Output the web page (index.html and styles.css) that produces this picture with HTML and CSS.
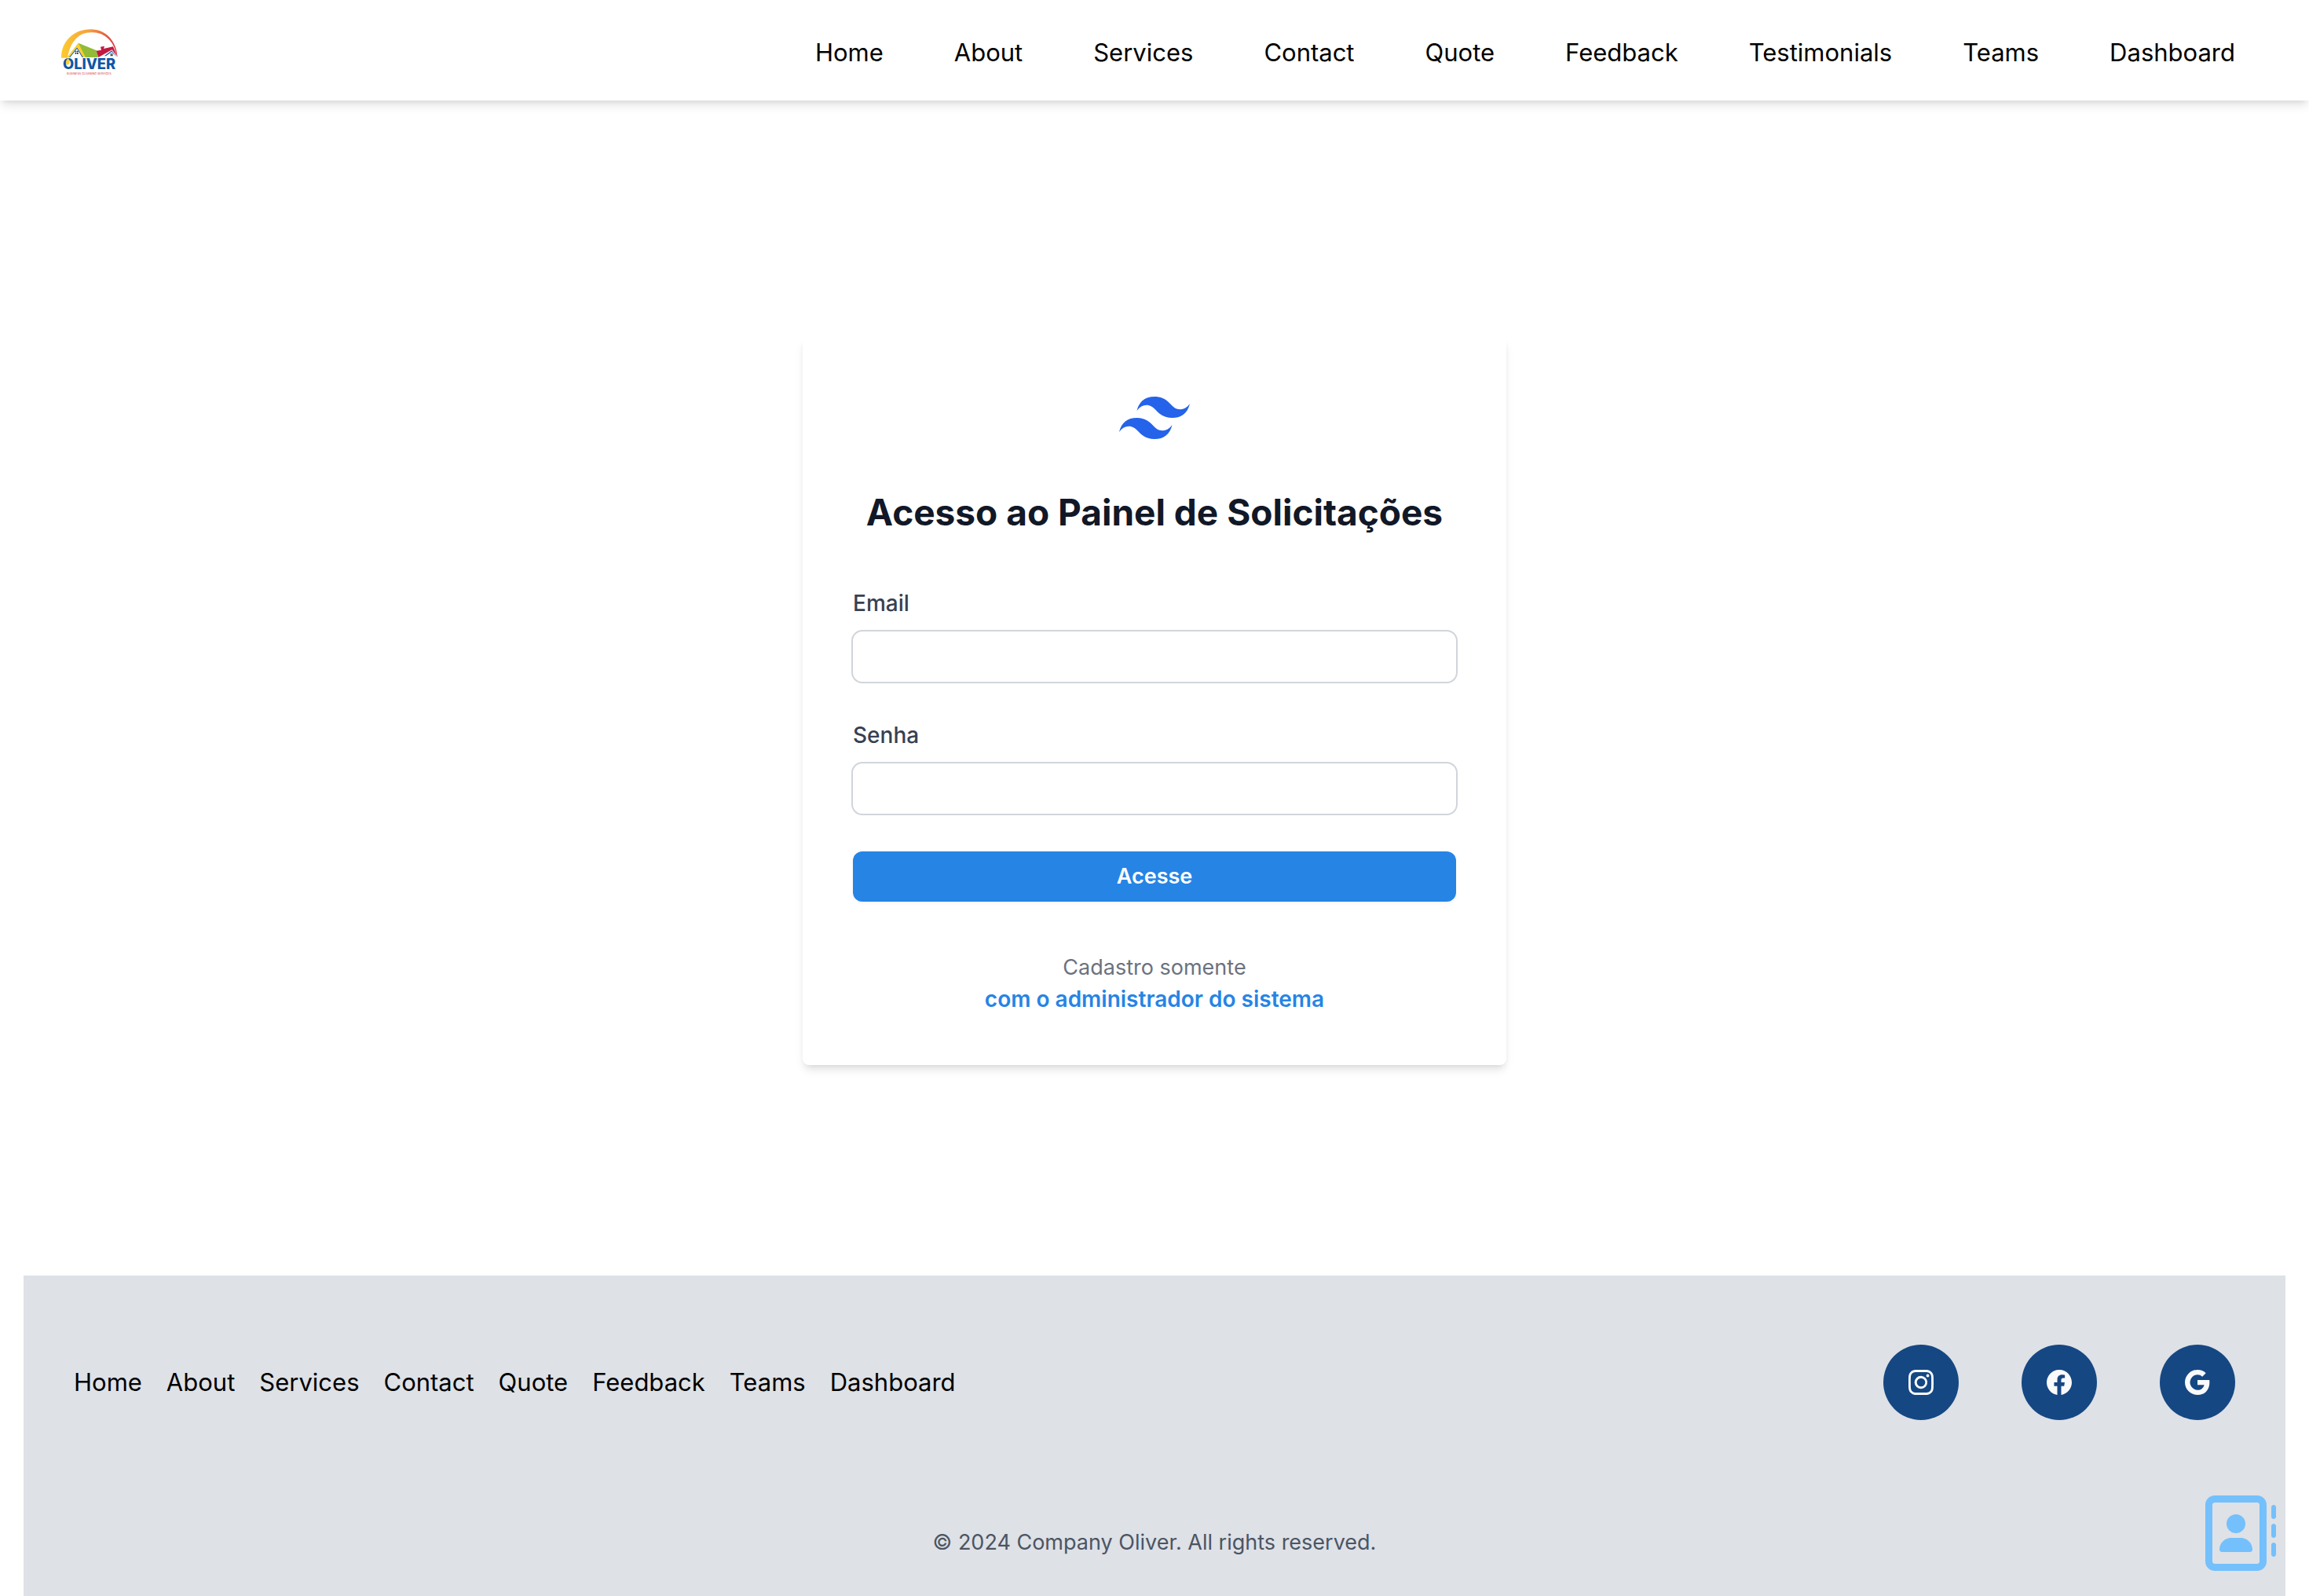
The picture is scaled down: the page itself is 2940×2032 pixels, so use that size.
FILE: index.html
```html
<!DOCTYPE html>
<html lang="pt">
<head>
<meta charset="utf-8">
<meta name="viewport" content="width=device-width, initial-scale=1">
<title>Oliver</title>
<link rel="stylesheet" href="styles.css">
</head>
<body>
<header class="header">
  <a class="logo" href="#" aria-label="Oliver">
    <svg viewBox="0 0 216 180" width="72" height="60">
      <defs>
        <linearGradient id="arc" x1="0" x2="1"><stop offset="0" stop-color="#fccb2f"/><stop offset=".5" stop-color="#f5a03c"/><stop offset="1" stop-color="#d8303f"/></linearGradient>
      </defs>
      <path fill="url(#arc)" d="M0 110C0 44 50 1 112 1c60 0 99 46 103 107l-5-14C200 46 164 11 116 13 62 13 34 52 24 110z"/>
      <path fill="#fad02c" d="M22 108 65 53l32 55H84L60 68 30 108z"/>
      <path fill="#1d5ea8" d="m30 108 30-38 24 38h-4L60 75l-26 33z"/>
      <path fill="#93bb38" d="m65 53 70 29 6 26H93z"/>
      <path fill="#c31941" d="m134 83 19-3-3-12 15-3-3 10 36-8 16 39-20-27-52 29z"/>
      <path fill="#1d5ea8" d="m164 103 29-21 19 26-19-21-22 16z"/>
      <path fill="#222" d="M53 83h5v5h-5zm7 0h5v5h-5zm-7 7h5v5h-5zm7 0h5v5h-5zM188 94h4v4h-4zm5 0h4v4h-4zm-5 5h4v4h-4zm5 0h4v4h-4z"/>
      <text class="logo-name" x="6" y="154" fill="#0f56a4">OLIVER</text>
      <path fill="#fad02c" d="M26 111c8 10 9 22-2 26-9-5-9-15 2-26z"/>
      <text class="logo-tag" x="21" y="173" fill="#e2585b">BUSINESS CLEANING SERVICES</text>
    </svg>
  </a>
  <nav class="nav" aria-label="Main">
    <a href="#">Home</a><a href="#">About</a><a href="#">Services</a><a href="#">Contact</a><a href="#">Quote</a><a href="#">Feedback</a><a href="#">Testimonials</a><a href="#">Teams</a><a href="#">Dashboard</a>
  </nav>
</header>
<main class="main">
  <section class="card">
    <svg class="mark" viewBox="0 0 54 33" width="90" height="55" aria-hidden="true"><path fill="#2563eb" fill-rule="evenodd" d="M27 0c-7.2 0-11.7 3.6-13.5 10.8 2.7-3.6 5.85-4.95 9.45-4.05 2.054.513 3.522 2.004 5.147 3.653C30.744 13.09 33.808 16.2 40.5 16.2c7.2 0 11.7-3.6 13.5-10.8-2.7 3.6-5.85 4.95-9.45 4.05-2.054-.513-3.522-2.004-5.147-3.653C36.756 3.11 33.692 0 27 0zM13.5 16.2C6.3 16.2 1.8 19.8 0 27c2.7-3.6 5.85-4.95 9.45-4.05 2.054.514 3.522 2.004 5.147 3.653C17.244 29.29 20.308 32.4 27 32.4c7.2 0 11.7-3.6 13.5-10.8-2.7 3.6-5.85 4.95-9.45 4.05-2.054-.513-3.522-2.004-5.147-3.653C23.256 19.31 20.192 16.2 13.5 16.2z"/></svg>
    <h1 class="title">Acesso ao Painel de Solicitações</h1>
    <form class="form">
      <div class="field"><label for="email">Email</label><input id="email" type="email"></div>
      <div class="field"><label for="senha">Senha</label><input id="senha" type="password"></div>
      <button class="submit" type="submit">Acesse</button>
    </form>
    <p class="note">Cadastro somente <a href="#">com o administrador do sistema</a></p>
  </section>
</main>
<footer class="footer">
  <div class="footer-row">
    <nav class="footer-nav" aria-label="Footer">
      <a href="#">Home</a><a href="#">About</a><a href="#">Services</a><a href="#">Contact</a><a href="#">Quote</a><a href="#">Feedback</a><a href="#">Teams</a><a href="#">Dashboard</a>
    </nav>
    <div class="social">
      <a href="#" aria-label="Instagram"><svg viewBox="0 0 16 16" width="32" height="32"><path d="M8 0C5.829 0 5.556.01 4.703.048 3.85.088 3.269.222 2.76.42a3.917 3.917 0 0 0-1.417.923A3.927 3.927 0 0 0 .42 2.76C.222 3.268.087 3.85.048 4.7.01 5.555 0 5.827 0 8.001c0 2.172.01 2.444.048 3.297.04.852.174 1.433.372 1.942.205.526.478.972.923 1.417.444.445.89.719 1.416.923.51.198 1.09.333 1.942.372C5.555 15.99 5.827 16 8 16s2.444-.01 3.298-.048c.851-.04 1.434-.174 1.943-.372a3.916 3.916 0 0 0 1.416-.923c.445-.445.718-.891.923-1.417.197-.509.332-1.09.372-1.942C15.99 10.445 16 10.173 16 8s-.01-2.445-.048-3.299c-.04-.851-.175-1.433-.372-1.941a3.926 3.926 0 0 0-.923-1.417A3.911 3.911 0 0 0 13.24.42c-.51-.198-1.092-.333-1.943-.372C10.443.01 10.172 0 7.998 0h.003zm-.717 1.442h.718c2.136 0 2.389.007 3.232.046.78.035 1.204.166 1.486.275.373.145.64.319.92.599.28.28.453.546.598.92.11.281.24.705.275 1.485.039.843.047 1.096.047 3.231s-.008 2.389-.047 3.232c-.035.78-.166 1.203-.275 1.485a2.47 2.47 0 0 1-.599.919c-.28.28-.546.453-.92.598-.28.11-.704.24-1.485.276-.843.038-1.096.047-3.232.047s-2.39-.009-3.233-.047c-.78-.036-1.203-.166-1.485-.276a2.478 2.478 0 0 1-.92-.598 2.48 2.48 0 0 1-.6-.92c-.109-.281-.24-.705-.275-1.485-.038-.843-.046-1.096-.046-3.233 0-2.136.008-2.388.046-3.231.036-.78.166-1.204.276-1.486.145-.373.319-.64.599-.92.28-.28.546-.453.92-.598.282-.11.705-.24 1.485-.276.738-.034 1.024-.044 2.515-.045v.002zm4.988 1.328a.96.96 0 1 0 0 1.920.96.96 0 0 0 0-1.920zm-4.270 1.122a4.109 4.109 0 1 0 0 8.217 4.109 4.109 0 0 0 0-8.217zm0 1.441a2.667 2.667 0 1 1 0 5.334 2.667 2.667 0 0 1 0-5.334z"/></svg></a>
      <a href="#" aria-label="Facebook"><svg viewBox="0 0 16 16" width="32" height="32"><path d="M16 8.049c0-4.446-3.582-8.05-8-8.05C3.58 0-.002 3.603-.002 8.05c0 4.017 2.926 7.347 6.75 7.951v-5.625h-2.03V8.05H6.75V6.275c0-2.017 1.195-3.131 3.022-3.131.876 0 1.791.157 1.791.157v1.98h-1.009c-.993 0-1.303.621-1.303 1.258v1.51h2.218l-.354 2.326H9.25V16c3.824-.604 6.75-3.934 6.75-7.951z"/></svg></a>
      <a href="#" aria-label="Google"><svg viewBox="0 0 16 16" width="32" height="32"><path d="M15.545 6.558a9.42 9.42 0 0 1 .139 1.626c0 2.434-.87 4.492-2.384 5.885h.002C11.978 15.292 10.158 16 8 16A8 8 0 1 1 8 0a7.689 7.689 0 0 1 5.352 2.082l-2.284 2.284A4.347 4.347 0 0 0 8 3.166c-2.087 0-3.86 1.408-4.492 3.304a4.792 4.792 0 0 0 0 3.063h.003c.635 1.893 2.405 3.301 4.492 3.301 1.078 0 2.004-.276 2.722-.764h-.003a3.702 3.702 0 0 0 1.599-2.431H8v-3.08h7.545z"/></svg></a>
    </div>
  </div>
  <p class="copyright">© 2024 Company Oliver. All rights reserved.</p>
</footer>
<a class="contact-tab" href="#" aria-label="Contact">
  <svg viewBox="0 0 512 512" width="96" height="96"><path fill="#74c0fc" d="M384 48c8.800 0 16 7.200 16 16V448c0 8.800-7.200 16-16 16H96c-8.800 0-16-7.200-16-16V64c0-8.800 7.200-16 16-16H384zM96 0C60.700 0 32 28.700 32 64V448c0 35.300 28.700 64 64 64H384c35.300 0 64-28.700 64-64V64c0-35.300-28.700-64-64-64H96zM240 256a64 64 0 1 0 0-128 64 64 0 1 0 0 128zm-32 32c-44.200 0-80 35.800-80 80c0 8.800 7.200 16 16 16H336c8.800 0 16-7.200 16-16c0-44.200-35.800-80-80-80H208zM512 80c0-8.800-7.200-16-16-16s-16 7.200-16 16v64c0 8.800 7.200 16 16 16s16-7.200 16-16V80zM496 192c-8.800 0-16 7.200-16 16v64c0 8.800 7.200 16 16 16s16-7.200 16-16V208c0-8.800-7.200-16-16-16zm16 144c0-8.800-7.200-16-16-16s-16 7.200-16 16v64c0 8.800 7.200 16 16 16s16-7.200 16-16V336z"/></svg>
</a>
</body>
</html>
```
FILE: styles.css
```css
* {
  box-sizing: border-box;
  margin: 0;
  padding: 0;
}

body {
  min-height: 100vh;
  display: flex;
  flex-direction: column;
  background: #fff;
  color: #000;
  font-family: Inter, sans-serif;
  font-size: 27px;
  line-height: 40px;
}

a {
  color: inherit;
  text-decoration: none;
}

svg {
  display: block;
}

.header {
  display: flex;
  align-items: center;
  justify-content: space-between;
  height: 128px;
  padding: 6px 94px 0 78px;
  box-shadow: 0 8px 12px -2px rgb(0 0 0 / 10%), 0 4px 8px -4px rgb(0 0 0 / 10%);
}

.logo-name {
  font: 800 55px Inter, sans-serif;
}

.logo-tag {
  font: 500 11px Inter, sans-serif;
}

.nav {
  display: flex;
  gap: 90px;
  font-size: 31px;
  line-height: 48px;
}

.main {
  flex: 1;
  display: flex;
  justify-content: center;
  align-items: flex-start;
  padding: 300px 32px 268px;
}

.card {
  width: 100%;
  max-width: 896px;
  padding: 77px 64px 64px;
  border-radius: 8px;
  background: #fff;
  box-shadow: 0 8px 12px -2px rgb(0 0 0 / 10%), 0 4px 8px -4px rgb(0 0 0 / 10%);
}

.mark {
  margin: 0 auto;
}

.title {
  margin-top: 56px;
  color: #111827;
  font-size: 46px;
  font-weight: 700;
  line-height: 72px;
  text-align: center;
}

.form {
  display: flex;
  flex-direction: column;
  gap: 46px;
  margin-top: 60px;
}

.field {
  display: flex;
  flex-direction: column;
  gap: 14px;
}

.field label {
  color: #374151;
  font-size: 28px;
  font-weight: 500;
}

.field input {
  height: 68px;
  margin: 0 -2px;
  padding: 0 24px;
  border: 2px solid #d1d5db;
  border-radius: 14px;
  background: #fff;
  font: inherit;
}

.submit {
  height: 64px;
  border: 0;
  border-radius: 12px;
  background: #2684e5;
  box-shadow: 0 2px 4px rgb(0 0 0 / 5%);
  color: #fff;
  font: inherit;
  font-weight: 600;
}

.note {
  margin-top: 64px;
  color: #6b7280;
  text-align: center;
}

.note a {
  display: block;
  color: #2684e5;
  font-size: 28px;
  font-weight: 600;
}

.footer {
  margin: 0 30px;
  padding: 88px 64px 48px;
  background: #dee1e6;
}

.footer-row {
  display: flex;
  align-items: center;
  justify-content: space-between;
}

.footer-nav {
  display: flex;
  gap: 31px;
  font-size: 31px;
  line-height: 48px;
}

.social {
  display: flex;
  gap: 80px;
}

.social a {
  display: grid;
  place-items: center;
  width: 96px;
  height: 96px;
  border-radius: 50%;
  background: #154783;
}

.social svg {
  fill: #f9fafb;
}

.copyright {
  margin-top: 136px;
  color: #4b5563;
  text-align: center;
}

.contact-tab {
  position: fixed;
  right: 42px;
  bottom: 32px;
}
```
